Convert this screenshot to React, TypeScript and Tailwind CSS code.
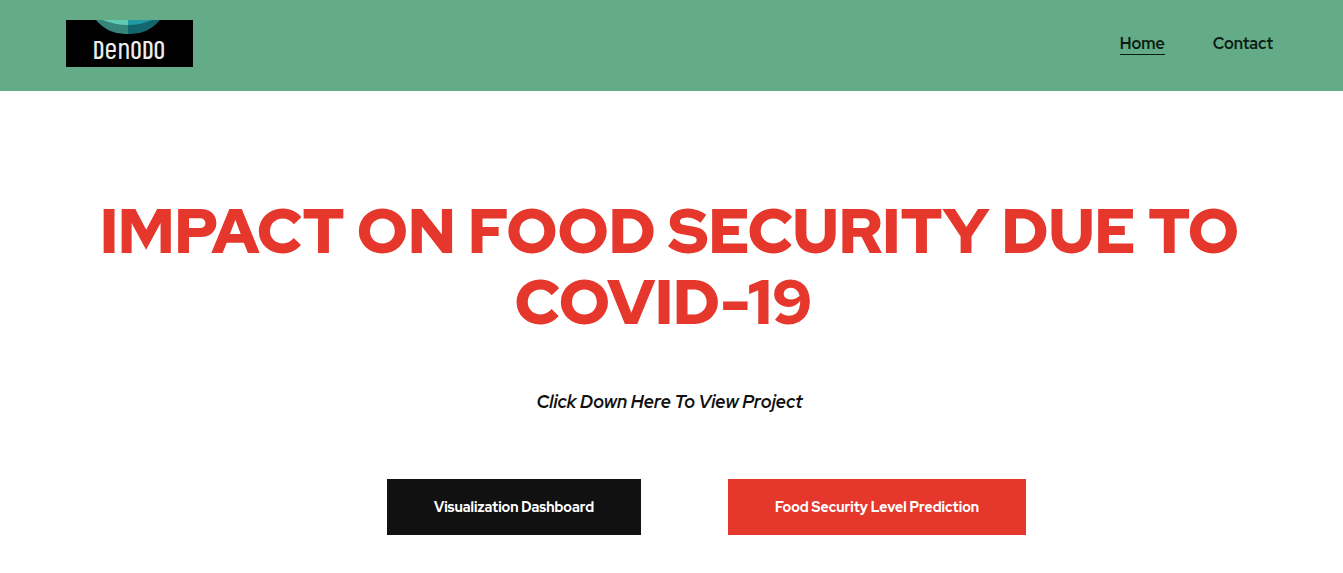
function Logo() {
  return (
    <svg className="block h-[47px] w-[127px]" viewBox="0 0 127 47" role="img" aria-label="Denodo">
      <rect width="127" height="47" fill="#000" />
      <path d="M30 0A38 38 0 0 0 62 14V0Z" fill="#36857d" />
      <path d="M62 14A38 38 0 0 0 94 0H62Z" fill="#14666e" />
      <path d="M37 0Q49 5 62 5V0Z" fill="#60cbb4" />
      <path d="M62 5Q75 5 86 0H62Z" fill="#2099a5" />
      <text
        x="63"
        y="39"
        textAnchor="middle"
        fill="#ececec"
        fontSize="25"
        fontWeight="500"
        fontFamily="'Saira Extra Condensed', 'Barlow Condensed', 'Roboto Condensed', 'DejaVu Sans Condensed', sans-serif"
      >
        D<tspan fontSize="31" fontWeight="400">en</tspan>ODO
      </text>
    </svg>
  );
}

const actions = [
  { label: "Visualization Dashboard", href: "#dashboard", color: "bg-[#111111]" },
  { label: "Food Security Level Prediction", href: "#prediction", color: "bg-[#e5372b]" },
];

export default function App() {
  return (
    <div className="min-h-screen bg-white font-['Red_Hat_Display','Montserrat','Figtree','Lato',sans-serif] text-[#111111]">
      <header className="flex items-center justify-between bg-[#63ac87] px-[66px] pt-5 pb-6">
        <a href="#home">
          <Logo />
        </a>
        <nav className="flex items-start gap-12 pt-0.5 pr-1 text-base leading-5 font-bold text-[#0b1c12]">
          <a href="#home" aria-current="page" className="border-b border-[#0b1c12]">
            Home
          </a>
          <a href="#contact">Contact</a>
        </nav>
      </header>
      <main className="pt-[104px] pr-[70px] pb-[38px] pl-[66px] text-center">
        <h1 className="text-[63px] leading-[71px] font-black text-[#e5372b]">
          IMPACT ON FOOD SECURITY DUE TO COVID-19&nbsp;
        </h1>
        <p className="mt-[51px] text-lg leading-7 font-bold italic">Click Down Here To View Project</p>
        <div className="mt-[63px] flex flex-wrap justify-center gap-[87px] pl-[74px]">
          {actions.map(({ label, href, color }) => (
            <a
              key={href}
              href={href}
              className={`${color} px-[47px] py-4 text-sm leading-6 font-extrabold text-white`}
            >
              {label}
            </a>
          ))}
        </div>
      </main>
    </div>
  );
}
